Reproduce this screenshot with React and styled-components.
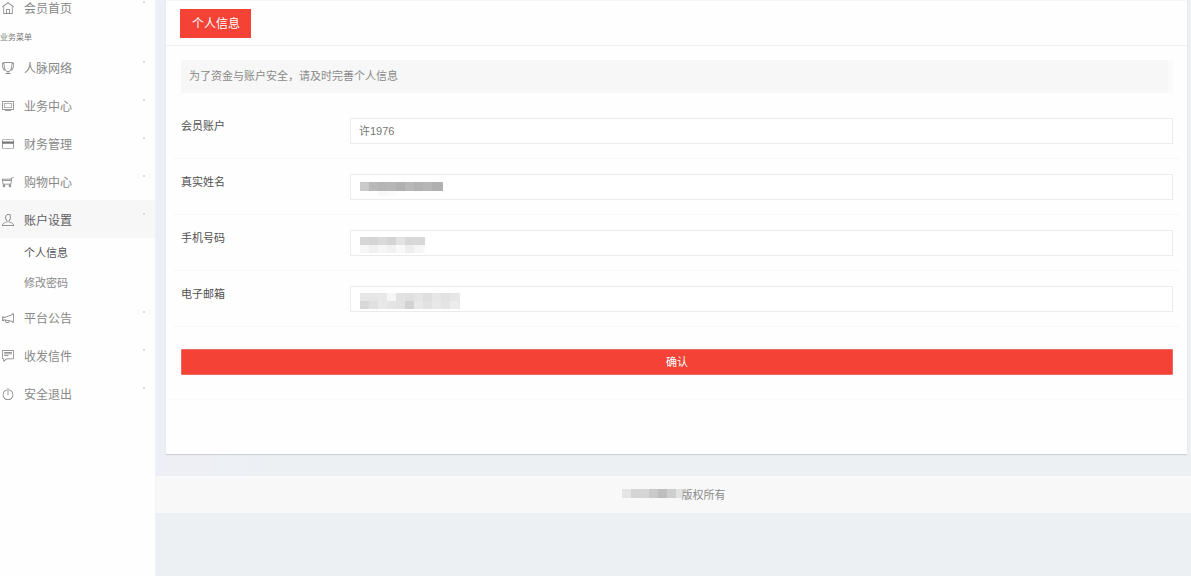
import React from "react";
import styled, { createGlobalStyle } from "styled-components";
import {
  TfiHome,
  TfiCup,
  TfiCreditCard,
  TfiShoppingCart,
  TfiUser,
  TfiAnnouncement,
  TfiCommentAlt,
  TfiPowerOff,
} from "react-icons/tfi";

const Global = createGlobalStyle`
  * { box-sizing: border-box; }
  body {
    margin: 0;
    background: #ecf0f3;
    font-family: "Liberation Sans", "Noto Sans CJK SC", sans-serif;
    font-size: 11px;
    color: #777;
  }
  ul { list-style: none; margin: 0; padding: 0; }
`;

const Page = styled.div`
  display: flex;
  min-height: 100vh;
  overflow: hidden;
`;

const Sidebar = styled.nav`
  flex: 0 0 155px;
  margin-top: -12px;
  background: #fefefe;
`;

const NavLink = styled.a`
  display: flex;
  align-items: center;
  height: 38px;
  padding: 0 10px 0 2px;
  gap: 10px;
  font-size: 12px;
  color: ${(p) => (p.$active ? "#606060" : "#888")};
  background: ${(p) => (p.$active ? "#f7f7f7" : "transparent")};
  text-decoration: none;

  svg {
    flex: none;
    margin-top: 2px;
    color: #777;
  }
`;

const Tick = styled.span`
  align-self: flex-start;
  width: 2px;
  height: 2px;
  margin: 13px 0 0 auto;
  border-radius: 1px;
  background: #d0d0d0;
`;

const SectionTitle = styled.div`
  height: 22px;
  line-height: 24px;
  font-size: 8px;
  color: #777;
`;

const SubLink = styled.a`
  display: block;
  padding-left: 24px;
  line-height: 30px;
  color: ${(p) => (p.$active ? "#555" : "#888")};
  text-decoration: none;
`;

const Content = styled.main`
  flex: 1;
  min-width: 0;
  border-left: 1px solid #f2f2f8;
`;

const CardArea = styled.div`
  padding: 0 4px 22px 10px;
  background: linear-gradient(to right, #eeeff6, #ecf0f3 120px);
`;

const Card = styled.section`
  min-height: 454px;
  background: #fefefe;
  border-top: 1px solid #f5f5fa;
  box-shadow: 0 1px 1px #d0d3d6;
`;

const CardHeader = styled.header`
  padding: 8px 14px 7px;
  border-bottom: 1px solid #f0f0f0;
`;

const Badge = styled.h1`
  display: inline-block;
  margin: 0;
  padding: 1px 11px 0 12px;
  line-height: 28px;
  font-size: 12px;
  font-weight: 400;
  color: #fff;
  background: #f44336;
  vertical-align: top;
`;

const CardBody = styled.form`
  padding: 14px 14px 0 15px;
`;

const Notice = styled.p`
  margin: 0 0 10px;
  padding: 0 8px;
  line-height: 33px;
  color: #8a8a8a;
  background: #f7f7f7;
  border-right: 5px solid #fafafa;
`;

const Row = styled.div`
  display: grid;
  grid-template-columns: 169px 1fr;
  align-items: start;
  height: 56px;
  margin: 0 -8px;
  padding: 15px 8px 0;
  border-bottom: 1px solid #f8f8f8;
`;

const Label = styled.label`
  line-height: 16px;
  color: #505050;
`;

const Field = styled.div`
  position: relative;
`;

const Input = styled.input`
  display: block;
  width: 100%;
  height: 26px;
  padding: 0 8px 2px;
  border: 1px solid #ebebeb;
  background: #fff;
  font: inherit;
  color: #777;
  outline: none;
`;

const FieldMask = styled.div`
  position: absolute;
  top: 7px;
  left: 10px;
  line-height: 0;
`;

const Actions = styled.div`
  margin: 0 -14px 0 -15px;
  padding: 22px 14px 24px 15px;
  border-bottom: 1px solid #fafafa;
`;

const Submit = styled.button`
  display: block;
  width: 100%;
  height: 26px;
  padding: 0 0 2px;
  border: 1px solid #e8695f;
  border-radius: 1px;
  background: #f44336;
  font: inherit;
  color: #fff;
`;

const Footer = styled.footer`
  display: flex;
  align-items: center;
  justify-content: center;
  height: 37px;
  padding-bottom: 2px;
  background: #f8f8f8;
  color: #8a8a8a;
`;

function MonitorIcon() {
  return (
    <svg width="12" height="12" viewBox="0 0 12 12" fill="none" stroke="currentColor">
      <rect x="0.5" y="1.5" width="11" height="8" strokeOpacity="0.75" />
      <rect x="2.5" y="3.5" width="7" height="4" strokeOpacity="0.55" />
      <path d="M3 10.5h6" strokeOpacity="0.7" />
    </svg>
  );
}

const grey = (v) => `rgb(${v},${v},${v})`;

// Each band is a row of grey cells: its top, its height and the shade of every cell.
function Mosaic({ width, height, cell, bands }) {
  return (
    <svg width={width} height={height} shapeRendering="crispEdges" aria-hidden="true">
      {bands.map((b) =>
        b.shades.map((v, i) => (
          <rect
            key={`${b.y}-${i}`}
            x={i * cell}
            y={b.y}
            width={Math.min(cell, width - i * cell)}
            height={b.h}
            fill={grey(v)}
          />
        ))
      )}
    </svg>
  );
}

const masks = {
  name: {
    width: 83, height: 15, cell: 9,
    bands: [
      { y: 1, h: 9, shades: [202, 184, 180, 182, 176, 184, 178, 182, 176, 178] },
      { y: 10, h: 5, shades: [254, 254, 248, 250, 254, 254, 254, 254, 254, 254] },
    ],
  },
  phone: {
    width: 65, height: 16, cell: 9,
    bands: [
      { y: 0, h: 8, shades: [214, 212, 218, 212, 226, 216, 216, 214] },
      { y: 8, h: 8, shades: [246, 240, 246, 242, 248, 238, 246, 250] },
    ],
  },
  email: {
    width: 100, height: 16, cell: 9,
    bands: [
      { y: 0, h: 8, shades: [230, 230, 232, 246, 226, 224, 228, 222, 230, 226, 230, 232] },
      { y: 8, h: 8, shades: [216, 224, 232, 228, 226, 210, 232, 226, 232, 228, 236, 230] },
    ],
  },
  owner: {
    width: 60, height: 9, cell: 9,
    bands: [{ y: 0, h: 9, shades: [228, 212, 214, 202, 190, 206, 226] }],
  },
};

const topItems = [
  ["人脉网络", TfiCup],
  ["业务中心", MonitorIcon],
  ["财务管理", TfiCreditCard],
  ["购物中心", TfiShoppingCart],
  ["账户设置", TfiUser, true],
];

const bottomItems = [
  ["平台公告", TfiAnnouncement],
  ["收发信件", TfiCommentAlt],
  ["安全退出", TfiPowerOff],
];

const fields = [
  { id: "account", label: "会员账户", value: "许1976" },
  { id: "name", label: "真实姓名", mask: masks.name },
  { id: "phone", label: "手机号码", mask: masks.phone },
  { id: "email", label: "电子邮箱", mask: masks.email },
];

function NavItem({ text, icon: Icon, active }) {
  return (
    <li>
      <NavLink href="#" $active={active}>
        <Icon size={12} />
        {text}
        <Tick />
      </NavLink>
    </li>
  );
}

export default function App() {
  return (
    <>
      <Global />
      <Page>
        <Sidebar>
          <ul>
            <NavItem text="会员首页" icon={TfiHome} />
          </ul>
          <SectionTitle>业务菜单</SectionTitle>
          <ul>
            {topItems.map(([text, icon, active]) => (
              <NavItem key={text} text={text} icon={icon} active={active} />
            ))}
          </ul>
          <ul>
            <li><SubLink href="#" $active>个人信息</SubLink></li>
            <li><SubLink href="#">修改密码</SubLink></li>
          </ul>
          <ul>
            {bottomItems.map(([text, icon]) => (
              <NavItem key={text} text={text} icon={icon} />
            ))}
          </ul>
        </Sidebar>
        <Content>
          <CardArea>
            <Card>
              <CardHeader>
                <Badge>个人信息</Badge>
              </CardHeader>
              <CardBody onSubmit={(e) => e.preventDefault()}>
                <Notice>为了资金与账户安全，请及时完善个人信息</Notice>
                {fields.map((f) => (
                  <Row key={f.id}>
                    <Label htmlFor={f.id}>{f.label}</Label>
                    <Field>
                      <Input id={f.id} type="text" defaultValue={f.value} />
                      {f.mask && (
                        <FieldMask>
                          <Mosaic {...f.mask} />
                        </FieldMask>
                      )}
                    </Field>
                  </Row>
                ))}
                <Actions>
                  <Submit type="submit">确认</Submit>
                </Actions>
              </CardBody>
            </Card>
          </CardArea>
          <Footer>
            <Mosaic {...masks.owner} />
            版权所有
          </Footer>
        </Content>
      </Page>
    </>
  );
}
